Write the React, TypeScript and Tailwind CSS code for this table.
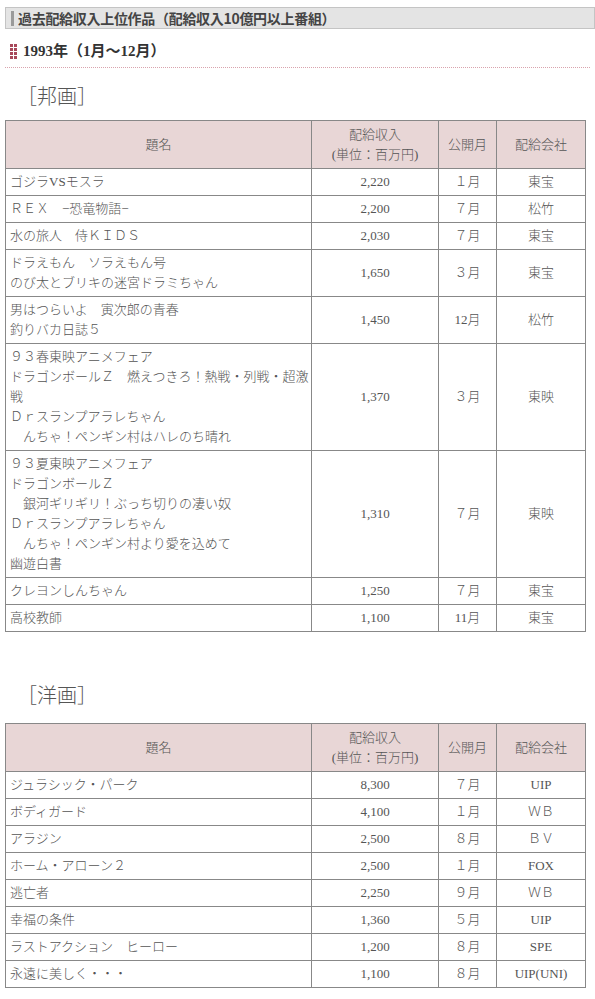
import React from "react";

const serif = { fontFamily: '"Liberation Serif","Noto Sans CJK JP",serif' };

type Row = { title: string[]; rev: string; month: string; co: string };

const hougaku: Row[] = [
  { title: ["ゴジラVSモスラ"], rev: "2,220", month: "１月", co: "東宝" },
  { title: ["ＲＥＸ　−恐竜物語−"], rev: "2,200", month: "７月", co: "松竹" },
  { title: ["水の旅人　侍ＫＩＤＳ"], rev: "2,030", month: "７月", co: "東宝" },
  { title: ["ドラえもん　ソラえもん号", "のび太とブリキの迷宮ドラミちゃん"], rev: "1,650", month: "３月", co: "東宝" },
  { title: ["男はつらいよ　寅次郎の青春", "釣りバカ日誌５"], rev: "1,450", month: "12月", co: "松竹" },
  {
    title: [
      "９３春東映アニメフェア",
      "ドラゴンボールＺ　燃えつきろ！熱戦・列戦・超激",
      "戦",
      "Ｄｒスランプアラレちゃん",
      "　んちゃ！ペンギン村はハレのち晴れ",
    ],
    rev: "1,370",
    month: "３月",
    co: "東映",
  },
  {
    title: [
      "９３夏東映アニメフェア",
      "ドラゴンボールＺ",
      "　銀河ギリギリ！ぶっち切りの凄い奴",
      "Ｄｒスランプアラレちゃん",
      "　んちゃ！ペンギン村より愛を込めて",
      "幽遊白書",
    ],
    rev: "1,310",
    month: "７月",
    co: "東映",
  },
  { title: ["クレヨンしんちゃん"], rev: "1,250", month: "７月", co: "東宝" },
  { title: ["高校教師"], rev: "1,100", month: "11月", co: "東宝" },
];

const yougaku: Row[] = [
  { title: ["ジュラシック・パーク"], rev: "8,300", month: "７月", co: "UIP" },
  { title: ["ボディガード"], rev: "4,100", month: "１月", co: "ＷＢ" },
  { title: ["アラジン"], rev: "2,500", month: "８月", co: "ＢＶ" },
  { title: ["ホーム・アローン２"], rev: "2,500", month: "１月", co: "FOX" },
  { title: ["逃亡者"], rev: "2,250", month: "９月", co: "ＷＢ" },
  { title: ["幸福の条件"], rev: "1,360", month: "５月", co: "UIP" },
  { title: ["ラストアクション　ヒーロー"], rev: "1,200", month: "８月", co: "SPE" },
  { title: ["永遠に美しく・・・"], rev: "1,100", month: "８月", co: "UIP(UNI)" },
];

function Mixed({ text }: { text: string }) {
  const parts = text.match(/[\x20-\x7e]+|[^\x20-\x7e]+/g) || [];
  return (
    <>
      {parts.map((p, i) =>
        /^[\x20-\x7e]+$/.test(p) ? (
          <span key={i} className="font-normal">
            {p}
          </span>
        ) : (
          <span key={i} className="font-light">
            {p}
          </span>
        )
      )}
    </>
  );
}

function DataTable({ rows }: { rows: Row[] }) {
  return (
    <table className="w-[580px] ml-[5px] border-collapse text-[13px] leading-[20px] text-[#555] table-fixed" style={serif}>
      <colgroup>
        <col className="w-[306px]" />
        <col className="w-[127px]" />
        <col className="w-[58px]" />
        <col className="w-[89px]" />
      </colgroup>
      <thead>
        <tr className="bg-[#e8d6d6] h-[48px]">
          <th className="border border-[#888] font-light text-center">題名</th>
          <th className="border border-[#888] font-light text-center">
            配給収入
            <br />
            <Mixed text="(単位：百万円)" />
          </th>
          <th className="border border-[#888] font-light text-center">公開月</th>
          <th className="border border-[#888] font-light text-center">配給会社</th>
        </tr>
      </thead>
      <tbody>
        {rows.map((r, i) => (
          <tr key={i}>
            <td className="border border-[#888] px-[4px] py-[3px] whitespace-pre">
              {r.title.map((t, j) => (
                <div key={j}>
                  <Mixed text={t} />
                </div>
              ))}
            </td>
            <td className="border border-[#888] text-center font-normal">{r.rev}</td>
            <td className="border border-[#888] text-center">
              <Mixed text={r.month} />
            </td>
            <td className="border border-[#888] text-center">
              <Mixed text={r.co} />
            </td>
          </tr>
        ))}
      </tbody>
    </table>
  );
}

function Dots() {
  return (
    <div className="grid grid-cols-2 gap-[1px] w-[7px]">
      {Array.from({ length: 8 }).map((_, i) => (
        <span key={i} className="block w-[3px] h-[3px] bg-[#a8485a]" />
      ))}
    </div>
  );
}

export default function App() {
  return (
    <div className="w-[595px] h-[999px] bg-white overflow-hidden">
      <div className="pt-[7px] pl-[5px]">
        <div
          className="h-[22px] bg-[#e4e4e4] border border-[#c4c4c4] flex items-center gap-[4px] pl-[5px]"
          style={{ fontFamily: '"Noto Sans CJK JP",sans-serif' }}
        >
          <span className="block w-[3px] h-[15px] bg-[#9a9a9a]" />
          <span className="text-[14px] font-bold text-[#444] leading-none tracking-[-0.3px]">
            過去配給収入上位作品（配給収入10億円以上番組）
          </span>
        </div>
      </div>
      <div className="flex items-center gap-[6px] pl-[10px] mt-[13px] h-[18px]">
        <Dots />
        <span className="text-[15px] font-bold text-[#333]" style={serif}>
          1993年（1月〜12月）
        </span>
      </div>
      <div className="mx-[5px] mt-[7px] border-t border-dotted border-[#d9a3ad]" />
      <div className="pl-[17px] mt-[17px] text-[20px] leading-[24px] text-[#555] font-light" style={serif}>
        ［邦画］
      </div>
      <div className="mt-[11px]">
        <DataTable rows={hougaku} />
      </div>
      <div className="pl-[17px] mt-[52px] text-[20px] leading-[24px] text-[#555] font-light" style={serif}>
        ［洋画］
      </div>
      <div className="mt-[15px]">
        <DataTable rows={yougaku} />
      </div>
    </div>
  );
}
